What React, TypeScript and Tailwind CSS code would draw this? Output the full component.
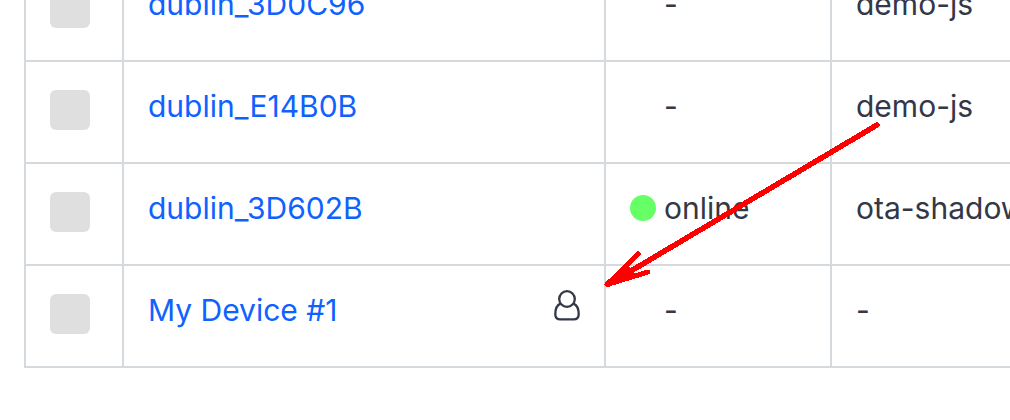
import React from "react";

type Device = {
  name: string;
  online?: boolean;
  group: string;
  owned?: boolean;
};

const devices: Device[] = [
  { name: "dublin_3D0C96", group: "demo-js" },
  { name: "dublin_E14B0B", group: "demo-js" },
  { name: "dublin_3D602B", online: true, group: "ota-shadow" },
  { name: "My Device #1", group: "-", owned: true },
];

const cell = "h-[102px] border-r-2 border-b-2 border-[#d5dade] pt-7 pl-6 align-top";

function UserIcon() {
  return (
    <svg
      className="h-10 w-[26px] shrink-0"
      viewBox="0 0 26 40"
      fill="none"
      stroke="#343746"
      strokeWidth="2.3"
      role="img"
      aria-label="Owner"
    >
      <circle cx="13" cy="9" r="7.8" />
      <path d="M6.6 13.6C3 15 1.3 19 1.3 24.2C1.3 27.8 3 29.4 6.4 29.4H19.6C23 29.4 24.7 27.8 24.7 24.2C24.7 19 23 15 19.4 13.6" />
    </svg>
  );
}

function DeviceRow({ device }: { device: Device }) {
  return (
    <tr>
      <td className={cell}>
        <input
          type="checkbox"
          aria-label={`Select ${device.name}`}
          className="block size-10 appearance-none rounded-md bg-[#dfdfdf] checked:bg-[#0f62fe]"
        />
      </td>
      <td className={`${cell} pr-6`}>
        <div className="flex h-8 items-center justify-between">
          <a href="#device" className="text-[#0f62fe]">
            {device.name}
          </a>
          {device.owned && <UserIcon />}
        </div>
      </td>
      <td className={cell}>
        <div className="flex h-8 items-center gap-2">
          <span className={`size-[26px] rounded-full ${device.online ? "bg-[#66ff66]" : ""}`} />
          <span>{device.online ? "online" : "-"}</span>
        </div>
      </td>
      <td className="h-[102px] overflow-hidden border-b-2 border-[#d5dade] pt-7 pl-6 align-top whitespace-nowrap">
        {device.group}
      </td>
    </tr>
  );
}

export default function App() {
  return (
    <main className="relative min-h-screen overflow-hidden bg-white pl-6 font-['Inter',sans-serif] text-[30px] leading-8 text-[#343746]">
      <table className="-mt-10 w-full table-fixed border-separate border-spacing-0 border-l-2 border-[#d5dade]">
        <colgroup>
          <col className="w-[98px]" />
          <col className="w-[482px]" />
          <col className="w-[226px]" />
          <col />
        </colgroup>
        <tbody>
          {devices.map((device) => (
            <DeviceRow key={device.name} device={device} />
          ))}
        </tbody>
      </table>
      <svg
        className="pointer-events-none absolute top-[120px] left-[600px] h-[172px] w-[284px]"
        viewBox="600 120 284 172"
        fill="none"
        stroke="#ff0000"
        strokeWidth="5.5"
        strokeLinecap="round"
        strokeLinejoin="round"
        shapeRendering="crispEdges"
        aria-hidden="true"
      >
        <path d="M877 125L609 284" />
        <path d="M638 254L607 284.500L648 272" strokeWidth="5" />
        <path d="M607 285L629 268L634 275Z" fill="#ff0000" strokeWidth="2" />
      </svg>
    </main>
  );
}
